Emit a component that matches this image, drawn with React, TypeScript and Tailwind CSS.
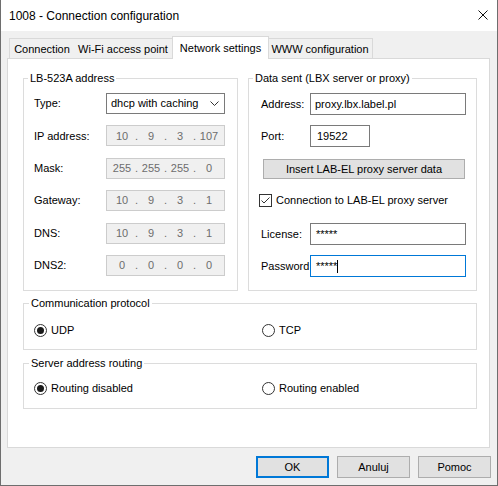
import React from 'react';

const ipRows = [
  { label: 'IP address:', octets: ['10', '9', '3', '107'] },
  { label: 'Mask:', octets: ['255', '255', '255', '0'] },
  { label: 'Gateway:', octets: ['10', '9', '3', '1'] },
  { label: 'DNS:', octets: ['10', '9', '3', '1'] },
  { label: 'DNS2:', octets: ['0', '0', '0', '0'] },
];

function GroupLabel({ text, className = '' }: { text: string; className?: string }) {
  return <span className={`-mt-[7px] px-[2px] leading-[13px] bg-white w-fit ${className}`}>{text}</span>;
}

function Radio({ checked, label }: { checked: boolean; label: string }) {
  return (
    <div className="flex items-center gap-[4px] h-[13px]">
      <span className="w-[13px] h-[13px] rounded-full border border-[#333] bg-white flex items-center justify-center">
        {checked && <span className="w-[7px] h-[7px] rounded-full bg-[#1a1a1a]" />}
      </span>
      <span className="leading-[13px]">{label}</span>
    </div>
  );
}

function IpField({ octets }: { octets: string[] }) {
  return (
    <div className="w-[119px] h-[21px] border border-[#cccccc] bg-[#f0f0f0] flex items-center pl-[4px] text-[#6d6d6d]">
      {octets.map((o, i) => (
        <React.Fragment key={i}>
          <span className="w-[22px] text-center">{o}</span>
          {i < 3 && <span className="w-[7px] text-center">.</span>}
        </React.Fragment>
      ))}
    </div>
  );
}

export default function App() {
  return (
    <div className="w-[498px] h-[486px] bg-[#f0f0f0] border-x border-b border-[#6e6e6e] flex flex-col font-['Liberation_Sans',Arial,sans-serif] text-[11px] text-black">
      {/* Title bar */}
      <div className="h-[31px] bg-white flex items-center justify-between pl-[8px] pr-[9px]">
        <span className="text-[12px]">1008 - Connection configuration</span>
        <svg width="10" height="10" viewBox="0 0 10 10" className="mb-[1px]">
          <path d="M0.5 0.5 L9.5 9.5 M9.5 0.5 L0.5 9.5" stroke="#111" strokeWidth="1" />
        </svg>
      </div>

      {/* Tabs */}
      <div className="h-[27px] flex items-end pl-[8px]">
        <div className="w-[66px] h-[20px] border-t border-l border-r border-[#d9d9d9] bg-[#f0f0f0] flex items-center justify-center pt-[2px]">Connection</div>
        <div className="-ml-px w-[99px] h-[20px] border-t border-r border-[#d9d9d9] bg-[#f0f0f0] flex items-center justify-center pt-[2px]">Wi-Fi access point</div>
        <div className="-ml-px w-[97px] h-[23px] -mb-px relative z-10 border-t border-l border-r border-[#d9d9d9] bg-white flex items-center justify-center">Network settings</div>
        <div className="-ml-px w-[105px] h-[20px] border-t border-r border-[#d9d9d9] bg-[#f0f0f0] flex items-center justify-center pt-[2px]">WWW configuration</div>
      </div>

      {/* Panel */}
      <div className="ml-[6px] w-[483px] h-[390px] border border-[#d9d9d9] bg-white pl-[15px] pt-[19px] flex flex-col">
        <div className="flex gap-[10px]">
          {/* LB-523A address */}
          <div className="w-[215px] h-[213px] border border-[#dcdcdc] flex flex-col">
            <GroupLabel text="LB-523A address" className="ml-[4px]" />
            <div className="mt-[8px] pl-[10px] flex flex-col gap-[11.4px]">
              <div className="flex items-center h-[21px]">
                <span className="w-[72px]">Type:</span>
                <div className="w-[119px] h-[21px] border border-[#7a7a7a] bg-white flex items-center justify-between pl-[4px] pr-[5px]">
                  <span>dhcp with caching</span>
                  <svg width="9" height="5" viewBox="0 0 9 5">
                    <path d="M0.5 0.5 L4.5 4.5 L8.5 0.5" stroke="#333" strokeWidth="1" fill="none" />
                  </svg>
                </div>
              </div>
              {ipRows.map((r) => (
                <div key={r.label} className="flex items-center h-[21px]">
                  <span className="w-[72px]">{r.label}</span>
                  <IpField octets={r.octets} />
                </div>
              ))}
            </div>
          </div>

          {/* Data sent */}
          <div className="w-[229px] h-[213px] border border-[#dcdcdc] flex flex-col">
            <GroupLabel text="Data sent (LBX server or proxy)" className="ml-[4px]" />
            <div className="mt-[8px] pl-[12px] flex items-center h-[22px]">
              <span className="w-[49px]">Address:</span>
              <div className="w-[156px] h-[22px] border border-[#7a7a7a] flex items-center pl-[4px]">proxy.lbx.label.pl</div>
            </div>
            <div className="mt-[10px] pl-[12px] flex items-center h-[22px]">
              <span className="w-[49px]">Port:</span>
              <div className="w-[60px] h-[22px] border border-[#7a7a7a] flex items-center pl-[6px]">19522</div>
            </div>
            <div className="mt-[12px] ml-[14px] w-[202px] h-[20px] border border-[#adadad] bg-[#e1e1e1] flex items-center justify-center">
              Insert LAB-EL proxy server data
            </div>
            <div className="mt-[15px] pl-[10px] flex items-center gap-[4px] h-[13px]">
              <span className="w-[13px] h-[13px] border border-[#333] bg-white flex items-center justify-center">
                <svg width="11" height="11" viewBox="0 0 11 11">
                  <path d="M1.5 5.5 L4 8 L9.5 2.5" stroke="#333" strokeWidth="1" fill="none" />
                </svg>
              </span>
              <span className="leading-[13px]">Connection to LAB-EL proxy server</span>
            </div>
            <div className="mt-[16px] pl-[12px] flex items-center h-[22px]">
              <span className="w-[49px]">License:</span>
              <div className="w-[156px] h-[22px] border border-[#7a7a7a] flex items-center pl-[5px]">*****</div>
            </div>
            <div className="mt-[10px] pl-[12px] flex items-center h-[22px]">
              <span className="w-[49px]">Password</span>
              <div className="w-[156px] h-[22px] border border-[#0078d7] flex items-center pl-[5px]">
                <span>*****</span>
                <span className="w-px h-[13px] bg-black" />
              </div>
            </div>
          </div>
        </div>

        {/* Communication protocol */}
        <div className="mt-[12px] w-[454px] h-[47px] border border-[#dcdcdc] flex flex-col">
          <GroupLabel text="Communication protocol" className="ml-[5px]" />
          <div className="mt-[14px] pl-[10px] flex">
            <div className="w-[228px]"><Radio checked label="UDP" /></div>
            <Radio checked={false} label="TCP" />
          </div>
        </div>

        {/* Server address routing */}
        <div className="mt-[13px] w-[454px] h-[46px] border border-[#dcdcdc] flex flex-col">
          <GroupLabel text="Server address routing" className="ml-[5px]" />
          <div className="mt-[12px] pl-[10px] flex">
            <div className="w-[228px]"><Radio checked label="Routing disabled" /></div>
            <Radio checked={false} label="Routing enabled" />
          </div>
        </div>
      </div>

      {/* Buttons */}
      <div className="mt-[8px] flex justify-end gap-[8px] pr-[6px]">
        <button className="w-[73px] h-[22px] border-2 border-[#0078d7] bg-[#e1e1e1]">OK</button>
        <button className="w-[73px] h-[22px] border border-[#adadad] bg-[#e1e1e1]">Anuluj</button>
        <button className="w-[73px] h-[22px] border border-[#adadad] bg-[#e1e1e1]">Pomoc</button>
      </div>
    </div>
  );
}
